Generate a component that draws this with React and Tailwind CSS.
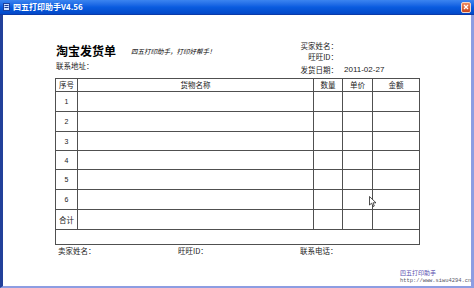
const cjk = { fontFamily: '"Noto Sans CJK SC", "Liberation Sans", sans-serif' }
const latin = { fontFamily: '"Liberation Sans", "Noto Sans CJK SC", sans-serif' }

const rows = [
  { label: '1', h: 'h-[20px]' },
  { label: '2', h: 'h-[20px]' },
  { label: '3', h: 'h-[19px]' },
  { label: '4', h: 'h-[19px]' },
  { label: '5', h: 'h-[20px]' },
  { label: '6', h: 'h-[20px]' },
]

const cell = 'border border-[#505050] p-0 text-center align-middle'

function TitleBar() {
  return (
    <div className="flex h-[15px] shrink-0 items-center bg-gradient-to-b from-[#3b84f0] via-[#0a5ce0] to-[#0348c8] pl-[3px] pr-[3px] border-b border-b-[#0b3aa8]">
      <svg width="7" height="8" viewBox="0 0 7 8" className="shrink-0">
        <rect x="0.5" y="0.5" width="6" height="7" fill="#cfe0ff" stroke="#1a3f9c" />
        <rect x="1.5" y="2" width="4" height="1" fill="#1a3f9c" />
        <rect x="1.5" y="4" width="4" height="1" fill="#1a3f9c" />
      </svg>
      <span className="ml-[3px] text-[8px] font-bold leading-none text-white" style={cjk}>
        四五打印助手V4.56
      </span>
      <div className="ml-auto flex h-[11px] w-[10px] items-center justify-center rounded-[2px] border border-[#f3d7c8] bg-gradient-to-b from-[#ee8a5e] to-[#c8451c]">
        <svg width="6" height="6" viewBox="0 0 6 6">
          <path d="M1 1 L5 5 M5 1 L1 5" stroke="white" strokeWidth="1.3" />
        </svg>
      </div>
    </div>
  )
}

function SlipHeader() {
  return (
    <div className="flex h-[63px] shrink-0">
      <div className="w-[241px] pt-[29px] pl-[1px]">
        <div className="flex h-[14px] items-center gap-[15px]">
          <span className="text-[12px] font-bold leading-[14px] text-black" style={cjk}>
            淘宝发货单
          </span>
          <span className="text-[6.5px] italic leading-none text-black" style={cjk}>
            四五打印助手，打印好帮手！
          </span>
        </div>
        <div className="mt-[3px] h-[10px] text-[7.5px] leading-[10px] text-[#222]" style={cjk}>
          联系地址：
        </div>
      </div>
      <div className="pt-[25px] text-[7.5px] text-[#222]" style={cjk}>
        <div className="flex h-[11px] items-center">
          <span className="w-[42px] text-right">买家姓名：</span>
        </div>
        <div className="flex h-[12px] items-center">
          <span className="w-[42px] text-right">旺旺ID：</span>
        </div>
        <div className="flex h-[14px] items-center">
          <span className="w-[42px] text-right">发货日期：</span>
          <span className="ml-[6px] text-[8px]" style={latin}>2011-02-27</span>
        </div>
      </div>
    </div>
  )
}

function GoodsTable() {
  return (
    <table className="w-[364px] table-fixed border-collapse text-[7.5px] leading-none text-[#222]" style={cjk}>
      <colgroup>
        <col className="w-[22px]" />
        <col className="w-[236px]" />
        <col className="w-[29px]" />
        <col className="w-[30px]" />
        <col className="w-[47px]" />
      </colgroup>
      <tbody>
        <tr className="h-[13px]">
          <td className={cell}>序号</td>
          <td className={cell}>货物名称</td>
          <td className={cell}>数量</td>
          <td className={cell}>单价</td>
          <td className={cell}>金额</td>
        </tr>
        {rows.map((r) => (
          <tr key={r.label} className={r.h}>
            <td className={cell + ' text-[7px]'} style={latin}>{r.label}</td>
            <td className={cell}></td>
            <td className={cell}></td>
            <td className={cell}></td>
            <td className={cell}></td>
          </tr>
        ))}
        <tr className="h-[20px]">
          <td className={cell}>合计</td>
          <td className={cell}></td>
          <td className={cell}></td>
          <td className={cell}></td>
          <td className={cell}></td>
        </tr>
        <tr className="h-[15px]">
          <td className={cell} colSpan={5}></td>
        </tr>
      </tbody>
    </table>
  )
}

export default function App() {
  return (
    <div className="relative flex h-[288px] w-[474px] flex-col overflow-hidden bg-white">
      <TitleBar />
      <div className="flex min-h-0 flex-1 flex-col border-l-[3px] border-r-[3px] border-b-[2px] border-l-[#22409a] border-r-[#8d9de2] border-b-[#8d9de2] pl-[52px]">
        <SlipHeader />
        <GoodsTable />
        <div className="mt-[1px] flex h-[10px] items-center pl-[3px] text-[7.5px] text-[#222]" style={cjk}>
          <span className="w-[120px]">卖家姓名：</span>
          <span className="w-[122px]">旺旺ID：</span>
          <span>联系电话：</span>
        </div>
        <div className="mt-auto ml-[345px] flex flex-col pb-[1px]">
          <span className="text-[6px] leading-[8px] text-[#5a4fb0]" style={cjk}>四五打印助手</span>
          <span className="whitespace-nowrap text-[5.4px] leading-[8px] text-[#556]" style={{ fontFamily: '"Liberation Mono", monospace' }}>
            http://www.siwu4294.cn
          </span>
        </div>
      </div>
      <svg width="8" height="12" viewBox="0 0 8 12" className="absolute left-[369px] top-[196px]">
        <path d="M0.5 0.5 L0.5 9 L2.6 7.2 L4 10.5 L5.3 10 L4 6.8 L7 6.8 Z" fill="white" stroke="#222" strokeWidth="0.8" strokeLinejoin="round" />
      </svg>
    </div>
  )
}
